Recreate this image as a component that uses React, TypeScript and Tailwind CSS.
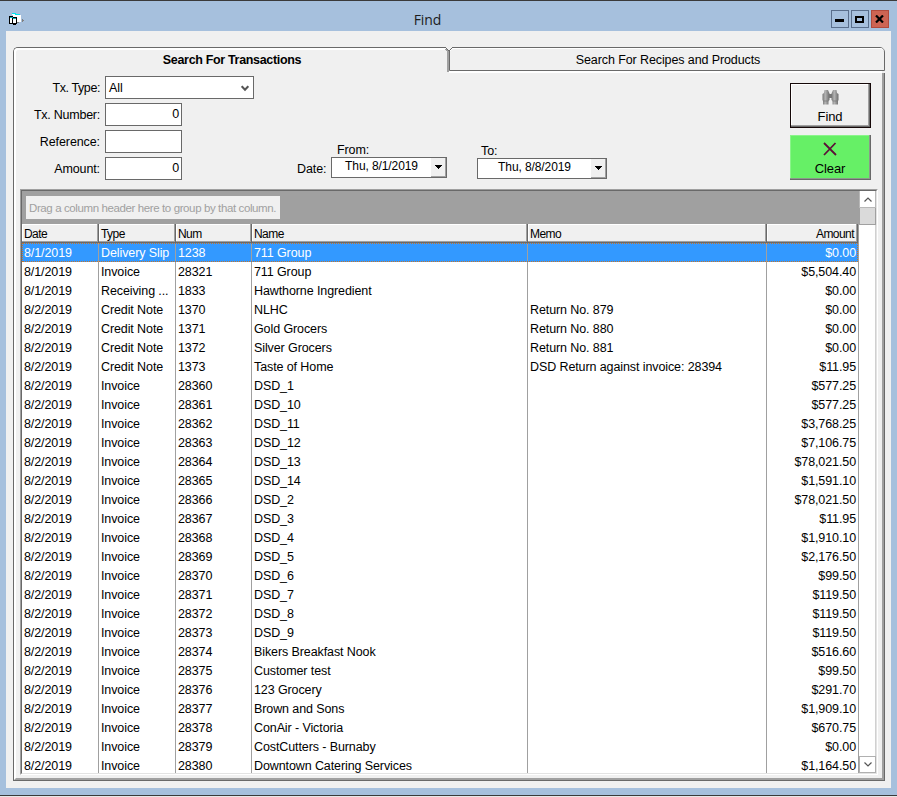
import React from 'react';
import { clsx } from 'clsx';

interface Transaction {
  date: string;
  type: string;
  num: string;
  name: string;
  memo?: string;
  amount: string;
}

const transactions: Transaction[] = [
  { date: '8/1/2019', type: 'Delivery Slip', num: '1238', name: '711 Group', amount: '$0.00' },
  { date: '8/1/2019', type: 'Invoice', num: '28321', name: '711 Group', amount: '$5,504.40' },
  { date: '8/1/2019', type: 'Receiving ...', num: '1833', name: 'Hawthorne Ingredient', amount: '$0.00' },
  { date: '8/2/2019', type: 'Credit Note', num: '1370', name: 'NLHC', memo: 'Return No. 879', amount: '$0.00' },
  { date: '8/2/2019', type: 'Credit Note', num: '1371', name: 'Gold Grocers', memo: 'Return No. 880', amount: '$0.00' },
  { date: '8/2/2019', type: 'Credit Note', num: '1372', name: 'Silver Grocers', memo: 'Return No. 881', amount: '$0.00' },
  { date: '8/2/2019', type: 'Credit Note', num: '1373', name: 'Taste of Home', memo: 'DSD Return against invoice: 28394', amount: '$11.95' },
  { date: '8/2/2019', type: 'Invoice', num: '28360', name: 'DSD_1', amount: '$577.25' },
  { date: '8/2/2019', type: 'Invoice', num: '28361', name: 'DSD_10', amount: '$577.25' },
  { date: '8/2/2019', type: 'Invoice', num: '28362', name: 'DSD_11', amount: '$3,768.25' },
  { date: '8/2/2019', type: 'Invoice', num: '28363', name: 'DSD_12', amount: '$7,106.75' },
  { date: '8/2/2019', type: 'Invoice', num: '28364', name: 'DSD_13', amount: '$78,021.50' },
  { date: '8/2/2019', type: 'Invoice', num: '28365', name: 'DSD_14', amount: '$1,591.10' },
  { date: '8/2/2019', type: 'Invoice', num: '28366', name: 'DSD_2', amount: '$78,021.50' },
  { date: '8/2/2019', type: 'Invoice', num: '28367', name: 'DSD_3', amount: '$11.95' },
  { date: '8/2/2019', type: 'Invoice', num: '28368', name: 'DSD_4', amount: '$1,910.10' },
  { date: '8/2/2019', type: 'Invoice', num: '28369', name: 'DSD_5', amount: '$2,176.50' },
  { date: '8/2/2019', type: 'Invoice', num: '28370', name: 'DSD_6', amount: '$99.50' },
  { date: '8/2/2019', type: 'Invoice', num: '28371', name: 'DSD_7', amount: '$119.50' },
  { date: '8/2/2019', type: 'Invoice', num: '28372', name: 'DSD_8', amount: '$119.50' },
  { date: '8/2/2019', type: 'Invoice', num: '28373', name: 'DSD_9', amount: '$119.50' },
  { date: '8/2/2019', type: 'Invoice', num: '28374', name: 'Bikers Breakfast Nook', amount: '$516.60' },
  { date: '8/2/2019', type: 'Invoice', num: '28375', name: 'Customer test', amount: '$99.50' },
  { date: '8/2/2019', type: 'Invoice', num: '28376', name: '123 Grocery', amount: '$291.70' },
  { date: '8/2/2019', type: 'Invoice', num: '28377', name: 'Brown and Sons', amount: '$1,909.10' },
  { date: '8/2/2019', type: 'Invoice', num: '28378', name: 'ConAir - Victoria', amount: '$670.75' },
  { date: '8/2/2019', type: 'Invoice', num: '28379', name: 'CostCutters - Burnaby', amount: '$0.00' },
  { date: '8/2/2019', type: 'Invoice', num: '28380', name: 'Downtown Catering Services', amount: '$1,164.50' },
];

const gridCols = 'grid grid-cols-[77px_77px_76px_276px_239px_91px]';

const WindowIcon = () => (
  <svg width="15" height="12" viewBox="0 0 15 12" shapeRendering="crispEdges">
    <path d="M3 1h8v1h1v7H9v1H4V2H3z" fill="#fff" />
    <path d="M3 0h4v1H3zM6 1h5v1H6z" fill="#00e5ee" />
    <path d="M13 6h1v1h1v1h-1v1h-1zM8 9h2v1H8z" fill="#808080" />
    <path d="M0 3h4v1h4v7H7v1H4v-1H0z" fill="#000" />
    <path d="M1 5h2v5H1zM4 6h3v4H4z" fill="#fff" />
    <path d="M1 4h3v1H1zM4 5h3v1H4z" fill="#00b5be" />
  </svg>
);

const TitleBar = () => (
  <header className="h-[30px] shrink-0 flex items-start justify-between pl-[9px] pr-2">
    <div className="w-[15px] pt-3">
      <WindowIcon />
    </div>
    <h1 className="pt-[9px] font-['Open_Sans',sans-serif] text-[14px] leading-5 text-[#1c1c1c]">Find</h1>
    <div className="flex gap-[2px] pt-[9px]">
      <button className="w-[18px] h-[18px] border border-[#5a6f8c] flex items-center justify-center">
        <span className="w-[9px] h-[3px] mt-[3px] bg-black" />
      </button>
      <button className="w-[18px] h-[18px] border border-[#5a6f8c] flex items-center justify-center">
        <span className="w-[9px] h-[7px] border-2 border-black" />
      </button>
      <button className="w-[18px] h-[18px] border border-[#b14a3c] bg-[#cd6453] flex items-center justify-center">
        <svg width="9" height="8" viewBox="0 0 9 8">
          <path d="M1 .5l7 7M8 .5l-7 7" stroke="#000" strokeWidth="2.2" />
        </svg>
      </button>
    </div>
  </header>
);

const TabStrip = () => (
  <div className="relative h-[26px] shrink-0 flex">
    <div className="w-[434px] h-full border-t border-l border-[#696969] rounded-tl-[5px]">
      <div className="h-full border-t-2 border-l-2 border-white rounded-tl-[4px] flex justify-center pt-[2px] pl-[1px] leading-[16px] font-bold tracking-[-0.33px]">
        Search For Transactions
      </div>
    </div>
    <div className="w-[2px] h-[22px] mt-[3px] bg-[#a0a0a0]" />
    <div className="flex-1">
      <div className="h-6 border border-[#696969] rounded-tr-[5px] bg-[#f0f0f0]">
        <div className="h-full border-t border-white rounded-tr-[4px] flex justify-center pt-[3px] pl-[2px] leading-[16px]">
          Search For Recipes and Products
        </div>
      </div>
      <div className="h-[2px] bg-white mr-[3px]" />
    </div>
    {/* notch where the two tabs meet */}
    <svg className="absolute left-[432px] top-0" width="8" height="5" viewBox="0 0 8 5" shapeRendering="crispEdges">
      <path d="M0 0h8v5H0z" fill="#f0f0f0" />
      <path d="M0 1h2v1H0zM5 3h1v1H5zM6 2h1v1H6zM7 1h1v1H7z" fill="#fff" />
      <path d="M0 2h2v1h1v1h1v1H2V4H1V3H0z" fill="#a0a0a0" />
      <path d="M0 0h1v1H0zM1 1h1v1H1zM2 2h1v1H2zM3 3h1v1H3zM4 4h1v1H4zM4 3h1v1H4zM5 2h1v1H5zM6 1h1v1H6zM7 0h1v1H7z" fill="#696969" />
    </svg>
  </div>
);

interface FieldProps {
  label: string;
  value?: string;
  labelClass?: string;
}

const Field: React.FC<FieldProps> = ({ label, value = '', labelClass }) => (
  <div className="flex h-[23px]">
    <label className={clsx('w-[84px] pt-[4px] text-right leading-[16px]', labelClass)}>{label}</label>
    <div className="ml-[5px] w-[77px] border border-[#696969] bg-white pr-[2px] pt-[2px] text-right leading-[16px]">{value}</div>
  </div>
);

interface DatePickerProps {
  label: string;
  value: string;
  className: string;
  labelClass: string;
}

const DatePicker: React.FC<DatePickerProps> = ({ label, value, className, labelClass }) => (
  <div className={className}>
    <div className={clsx('h-[15px]', labelClass)}>{label}</div>
    <div className="h-[21px] flex border border-r-0 border-[#696969] bg-white">
      <span className="flex-1 text-center leading-[16px] text-[12px]">{value}</span>
      <button className="w-4 bg-[#f0f0f0] border-r border-[#696969] flex items-center justify-center pb-[1px] shadow-[inset_-1px_-1px_#a0a0a0]">
        <svg width="7" height="4" viewBox="0 0 7 4" shapeRendering="crispEdges">
          <path d="M0 0h7v1H6v1H5v1H4v1H3V3H2V2H1V1H0z" />
        </svg>
      </button>
    </div>
  </div>
);

const Binoculars = () => (
  <svg width="17" height="15" viewBox="0 0 17 15">
    <defs>
      <linearGradient id="barrel" x1="0" x2="1">
        <stop offset="0" stopColor="#777" />
        <stop offset=".4" stopColor="#b4b4b4" />
        <stop offset="1" stopColor="#6c6c6c" />
      </linearGradient>
    </defs>
    <path d="M2.5 0h3.5l1.5 3.5v6.5l-1 1v3.5H1V11L.5 10V4L2 3z" fill="url(#barrel)" />
    <path d="M11 0h3.5l.5 3 1.5 1v6l-.5 1v3.5h-5.5V11l-1-1V3.5z" fill="url(#barrel)" />
    <path d="M7 4h3v4H7z" fill="#777" />
    <path d="M1 11h5.5M10.5 11H16" stroke="#777" strokeWidth=".7" />
  </svg>
);

const SearchForm = () => (
  <section className="h-[116px] shrink-0 flex">
    <div className="w-[251px] pt-[3px] flex flex-col gap-1">
      <div className="flex h-[23px]">
        <label className="w-[84px] pt-[4px] text-right leading-[16px] tracking-[-0.4px]">Tx. Type:</label>
        <div className="ml-[5px] w-[149px] border border-[#696969] bg-white pl-[3px] pr-[4px] pt-[1px] flex items-center justify-between">
          <span>All</span>
          <svg width="8" height="7" viewBox="0 0 8 7">
            <path d="M.7 1.2L4 4.7l3.3-3.5" fill="none" stroke="#555" strokeWidth="2" />
          </svg>
        </div>
      </div>
      <Field label="Tx. Number:" value="0" labelClass="tracking-[-0.25px]" />
      <Field label="Reference:" />
      <Field label="Amount:" value="0" />
    </div>
    <div className="flex pl-[30px] pt-[69px]">
      <span className="w-[34px] pt-[19px] leading-[16px]">Date:</span>
      <DatePicker label="From:" value="Thu, 8/1/2019" className="w-[116px]" labelClass="pl-[6px] leading-[17px]" />
      <DatePicker label="To:" value="Thu, 8/8/2019" className="w-[130px] ml-[30px] pt-[1px]" labelClass="pl-[4px] leading-[16px]" />
    </div>
    <div className="ml-auto mr-[11px] pt-[10px] flex flex-col gap-[7px]">
      <button className="w-[81px] h-[45px] border border-[#150808] bg-[#f0f0f0] shadow-[inset_-1px_-1px_#696969,inset_-2px_-2px_#a0a0a0,inset_1px_1px_#fff] flex flex-col items-center pt-[6px]">
        <Binoculars />
        <span className="leading-[16px] mt-[4px] -ml-[1px] text-[13px] tracking-[-0.1px]">Find</span>
      </button>
      <button className="w-[81px] h-[45px] bg-[#66f066] shadow-[inset_-1px_-1px_#696969,inset_-2px_-2px_#8a9a8a,inset_1px_1px_#8af58a] flex flex-col items-center pt-[7px]">
        <svg className="mr-[2px]" width="14" height="14" viewBox="0 0 14 14">
          <path d="M1 1l12 12M12.5 1L1 13" stroke="#5c1038" strokeWidth="1.8" />
        </svg>
        <span className="leading-[16px] mt-[5px] mr-[1px] text-[13px] tracking-[-0.1px]">Clear</span>
      </button>
    </div>
  </section>
);

const HeaderCell: React.FC<{ title: string; right?: boolean }> = ({ title, right }) => (
  <div
    className={clsx(
      'h-[19px] pt-[2px] leading-[16px] text-[12px] tracking-[-0.55px] bg-[#f0f0f0] border-r border-b border-[#696969] shadow-[inset_-1px_-1px_#a0a0a0,inset_1px_1px_#fff]',
      right ? 'text-right pr-[3px]' : 'pl-[2px]',
    )}
  >
    {title}
  </div>
);

const Row: React.FC<{ item: Transaction; selected: boolean }> = ({ item, selected }) => {
  const cells = [item.date, item.type, item.num, item.name, item.memo, item.amount];
  return (
    <div className={clsx(gridCols, 'h-[19px] shrink-0', selected && 'bg-[#3399ff] text-white outline-1 outline-dotted outline-[#c87428] -outline-offset-1')}>
      {cells.map((cell, i) => (
        <div
          key={i}
          className={clsx(
            'pt-[2px] leading-[16px] whitespace-nowrap overflow-hidden',
            i < 5 && 'border-r border-[#a0a0a0]',
            i === 5 ? 'text-right pr-[2px]' : 'pl-[2px]',
          )}
        >
          {cell}
        </div>
      ))}
    </div>
  );
};

const ScrollBar = () => (
  <div className="flex-1 flex flex-col border-l border-[#a0a0a0] bg-white">
    <div className="h-[17px] shrink-0 border border-t-0 border-[#b8b8b8] flex items-center justify-center">
      <svg width="8" height="5" viewBox="0 0 8 5">
        <path d="M.5 4.5L4 1l3.5 3.5" fill="none" stroke="#555" strokeWidth="1.2" />
      </svg>
    </div>
    <div className="h-[17px] shrink-0 bg-[#dadada] border-b border-x border-[#a0a0a0]" />
    <div className="flex-1 border-r border-[#d0d0d0]" />
    <div className="h-[17px] shrink-0 border border-[#b0b0b0] flex items-center justify-center">
      <svg width="8" height="5" viewBox="0 0 8 5">
        <path d="M.5 .5L4 4l3.5-3.5" fill="none" stroke="#555" strokeWidth="1.2" />
      </svg>
    </div>
  </div>
);

const TransactionGrid = () => (
  <section className="ml-1 mr-1 h-[586px] shrink-0 border-t border-l border-t-[#a0a0a0] border-l-[#a0a0a0] border-r border-b border-r-white border-b-white">
    <div className="h-full flex border-t border-l border-t-[#696969] border-l-[#696969] border-r border-b border-r-[#e3e3e3] border-b-[#e3e3e3] bg-white overflow-hidden">
      <div className="w-[836px] shrink-0 flex flex-col">
        <div className="h-[33px] shrink-0 bg-[#a0a0a0] pl-1 pt-[5px]">
          <div className="w-[254px] h-[23px] bg-[#f0f0f0] pl-[3px] pt-[4px] leading-[16px] text-[11.5px] tracking-[-0.39px] text-[#a0a0a0] whitespace-nowrap">
            Drag a column header here to group by that column.
          </div>
        </div>
        <div className={clsx(gridCols, 'shrink-0')}>
          <HeaderCell title="Date" />
          <HeaderCell title="Type" />
          <HeaderCell title="Num" />
          <HeaderCell title="Name" />
          <HeaderCell title="Memo" />
          <HeaderCell title="Amount" right />
        </div>
        {transactions.map((item, i) => (
          <Row key={item.num} item={item} selected={i === 0} />
        ))}
      </div>
      <ScrollBar />
    </div>
  </section>
);

export default function App() {
  return (
    <div className="w-[897px] h-[797px] overflow-hidden flex flex-col bg-[#a6c0dd] border-t border-[#3a3a3a] font-['Liberation_Sans',Arial,sans-serif] text-[12.5px] tracking-[-0.1px] text-black">
      <TitleBar />
      <main className="mx-[6px] h-[757px] shrink-0 bg-[#f0f0f0] pl-[7px] pr-[6px] pt-4">
        <div className="w-[872px] h-[734px] flex flex-col">
          <TabStrip />
          <div className="h-[708px] border-l border-r border-b border-[#696969]">
            <div className="h-full border-l-2 border-l-white border-r-2 border-b-2 border-r-[#a0a0a0] border-b-[#a0a0a0] flex flex-col">
              <SearchForm />
              <TransactionGrid />
            </div>
          </div>
        </div>
      </main>
      <div className="h-[7px] shrink-0" />
      <div className="h-px shrink-0 bg-[#3a3a3a]" />
      <div className="h-px shrink-0 bg-[#e8e8e8]" />
    </div>
  );
}
